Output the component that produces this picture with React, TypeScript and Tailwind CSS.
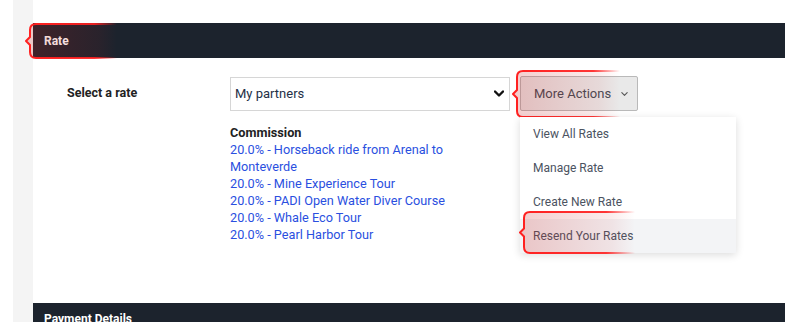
import React from "react";

const tours = [
  "Horseback ride from Arenal to Monteverde",
  "Mine Experience Tour",
  "PADI Open Water Diver Course",
  "Whale Eco Tour",
  "Pearl Harbor Tour",
];

const menuItems = ["View All Rates", "Manage Rate", "Create New Rate", "Resend Your Rates"];

// red brace-style callout drawn over the content
function Callout({ id, w, h, className }: { id: string; w: number; h: number; className: string }) {
  const mid = h / 2;
  const l = 5;
  const r = 6;
  const d = `M${w} 1 H${l + r} Q${l} 1 ${l} ${1 + r} V${mid - 4} L1 ${mid} L${l} ${mid + 4} V${h - 1 - r} Q${l} ${h - 1} ${l + r} ${h - 1} H${w}`;
  return (
    <svg width={w} height={h} className={`absolute pointer-events-none ${className}`}>
      <defs>
        <linearGradient id={`${id}-s`} x1="0" x2="1" y1="0" y2="0">
          <stop offset="0" stopColor="#ff2020" stopOpacity="1" />
          <stop offset="0.75" stopColor="#ff2020" stopOpacity="0.9" />
          <stop offset="1" stopColor="#ff2020" stopOpacity="0" />
        </linearGradient>
        <linearGradient id={`${id}-f`} x1="0" x2="1" y1="0" y2="0">
          <stop offset="0" stopColor="#c81e1e" stopOpacity="0.22" />
          <stop offset="0.8" stopColor="#c81e1e" stopOpacity="0.08" />
          <stop offset="1" stopColor="#c81e1e" stopOpacity="0" />
        </linearGradient>
      </defs>
      <path d={`${d} Z`} fill={`url(#${id}-f)`} stroke="none" />
      <path d={d} fill="none" stroke={`url(#${id}-s)`} strokeWidth="2" strokeLinejoin="round" />
    </svg>
  );
}

function Chevron({ className }: { className: string }) {
  return (
    <svg viewBox="0 0 10 6" className={className} fill="none" stroke="currentColor" strokeWidth="1.6" strokeLinecap="round" strokeLinejoin="round">
      <polyline points="1,1 5,5 9,1" />
    </svg>
  );
}

export default function App() {
  return (
    <div className="w-[785px] h-[322px] overflow-hidden bg-white flex font-['Roboto','Liberation_Sans',sans-serif]">
      <div className="w-[13px] shrink-0 bg-white" />
      <div className="w-[20px] shrink-0 bg-[#f4f4f4]" />
      <div className="flex-1 relative">
        <div className="h-[23px]" />
        <div className="h-[35px] bg-[#1c232d] flex items-center pl-[11px]">
          <span className="text-white text-[12px] font-bold">Rate</span>
        </div>
        <Callout id="c1" w={92} h={36} className="left-[-8px] top-[23px]" />

        <div className="h-[245px] pt-[18px] pl-[34px] flex items-start">
          <div className="w-[163px] h-[34px] flex items-center text-[12.5px] font-bold text-[#222]">Select a rate</div>
          <div className="flex flex-col">
            <div className="flex items-center gap-[10px]">
              <div className="w-[280px] h-[34px] border border-[#d6d6d6] flex items-center justify-between pl-[4px] pr-[5px] text-[13px] text-[#243046]">
                <span>My partners</span>
                <Chevron className="w-[10px] h-[7px] text-[#111] stroke-[2.4]" />
              </div>
              <div className="relative">
                <button className="w-[118px] h-[35px] bg-[#e9e9e9] border border-[#b9b9b9] rounded-[2px] flex items-center pl-[13px] gap-[10px] text-[13px] text-[#444b55]">
                  <span>More Actions</span>
                  <Chevron className="w-[7px] h-[4px] text-[#555]" />
                </button>
                <Callout id="c2" w={108} h={48} className="left-[-8px] top-[-6px]" />
                <div className="absolute left-0 top-[41px] w-[216px] bg-white shadow-[0_2px_8px_rgba(0,0,0,0.14)] z-10">
                  {menuItems.map((item, i) => (
                    <div
                      key={item}
                      className={`h-[34px] flex items-center pl-[13px] text-[12px] text-[#4b5361] ${i === 3 ? "bg-[#f3f4f6] relative" : ""}`}
                    >
                      {item}
                      {i === 3 && <Callout id="c3" w={116} h={43} className="left-[-1px] top-[-8px]" />}
                    </div>
                  ))}
                </div>
              </div>
            </div>
            <div className="mt-[13px] w-[222px] text-[12.7px] leading-[17px]">
              <div className="font-bold text-[#222]">Commission</div>
              {tours.map((t) => (
                <a key={t} className="block text-[#2a4fe0]">
                  20.0% - {t}
                </a>
              ))}
            </div>
          </div>
        </div>

        <div className="h-[40px] bg-[#1c232d] flex items-start pl-[11px] pt-[9px]">
          <span className="text-white text-[12px] font-bold leading-[14px]">Payment Details</span>
        </div>
      </div>
    </div>
  );
}
